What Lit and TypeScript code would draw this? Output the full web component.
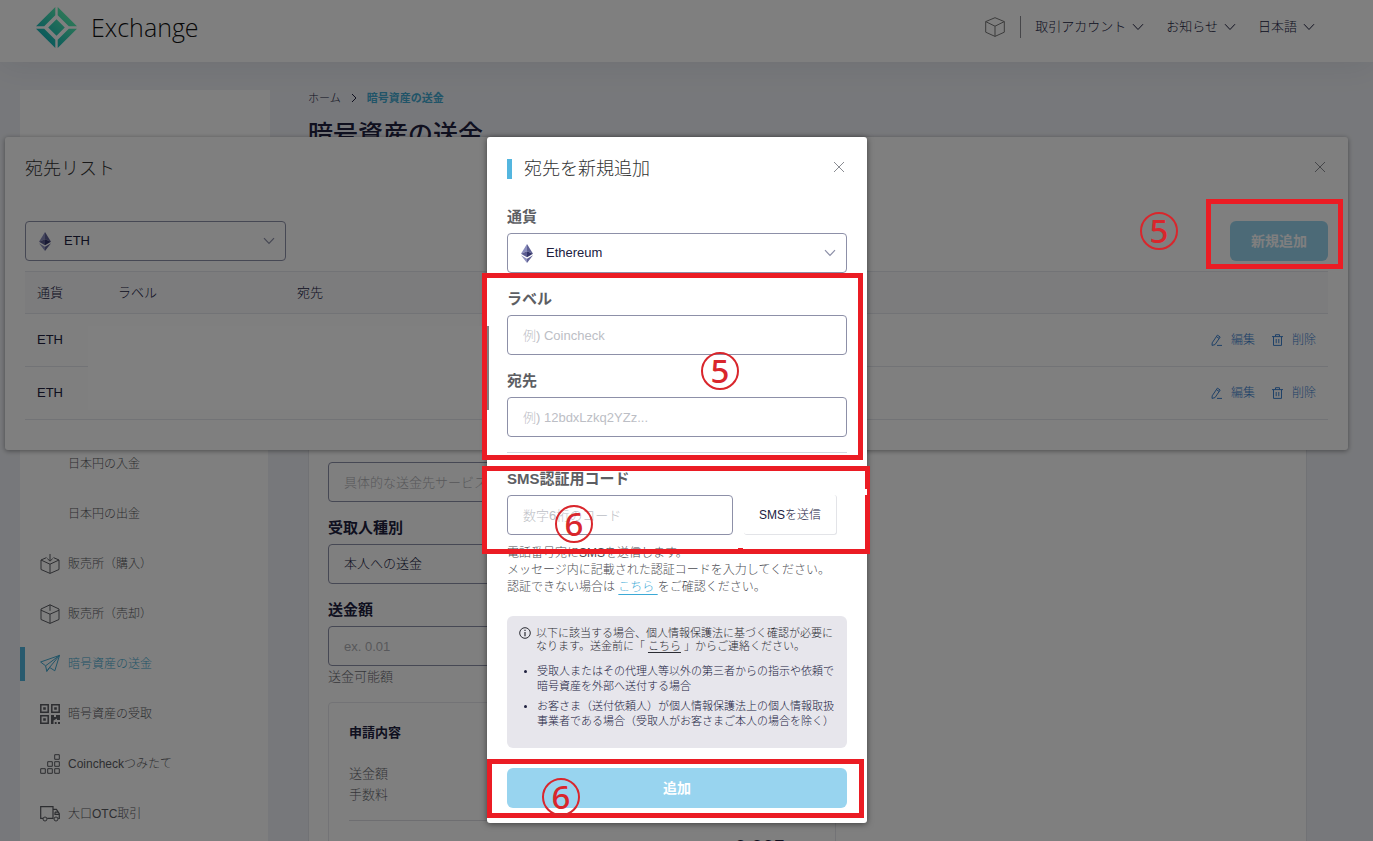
import { LitElement, html, css, svg } from "lit";
import { customElement } from "lit/decorators.js";

const line = (w: number, h: number, vb: string, body: unknown, cls = "icon") =>
  html`<svg class=${cls} width=${w} height=${h} viewBox=${vb} aria-hidden="true">${body}</svg>`;

const chevron = () => line(12, 8, "0 0 12 8", svg`<path d="M1 1.2 6 6.5 11 1.2"/>`, "icon chev");
const cross = () => line(12, 12, "0 0 12 12", svg`<path d="M1 1 11 11M11 1 1 11"/>`);
const cube = () => line(20, 20, "0 0 20 20", svg`<path d="M10 .7 19.3 4.6V15.2L10 19.4.7 15.2V4.6ZM.7 4.6 10 9.2 19.3 4.6M10 9.2V19.4"/>`);
const eth = () => html`<svg class="eth" width="12" height="19" viewBox="0 0 12 19" aria-hidden="true">
  <path d="M6 0 0 9.8 6 7.2Z" fill="#8a8dbd"/><path d="M6 0 12 9.8 6 7.2Z" fill="#5f6195"/>
  <path d="M0 9.8 6 7.2V13.2Z" fill="#5b5c91"/><path d="M12 9.8 6 7.2V13.2Z" fill="#33346a"/>
  <path d="M0 11.2 6 14.7V19Z" fill="#9092bf"/><path d="M12 11.2 6 14.7V19Z" fill="#5f6195"/></svg>`;
const pencil = () => line(11, 12, "0 0 11 12", svg`<path d="M1.2 8.8 6.4 1.1 9.2 3 4 10.6 1 11.4ZM5.4 2.6 8.2 4.5M6 11.4H11"/>`);
const trash = () => line(11, 12, "0 0 11 12", svg`<path d="M0 2.6H11M3.5 2.6V.7H7.5V2.6M1.5 2.6V11.4H9.5V2.6M4.2 5V9.2M6.8 5V9.2"/>`);

const menuIcons: Record<string, unknown> = {
  buy: svg`<path d="M6.5 3.6 1 6V15.5L10 19.4 19 15.5V6L13.5 3.6M1 6 10 10.2 19 6M10 10.2V19.4M10 0V6.8M7.3 4.6 10 7.2 12.7 4.6"/>`,
  sell: svg`<path d="M10 .8 19 5V15.5L10 19.4 1 15.5V5ZM1 6.2 10 10.2 19 6.2M10 10.2V19.4M10 .8V6.8"/>`,
  send: svg`<path d="M.6 8 19.5 1.4 14.8 16.8 9.6 13.4 6.8 17.4 5.6 11.8ZM19.5 1.4 5.6 11.8M19.5 1.4 9.6 13.4M6.8 17.4 9.6 13.4"/>`,
  qr: svg`<path stroke-width="1.5" d="M.8.8H8.2V8.2H.8ZM11.8.8H19.2V8.2H11.8ZM.8 11.8H8.2V19.2H.8Z"/><path class="solid" d="M3.2 3.2H5.8V5.8H3.2ZM14.2 3.2H16.8V5.8H14.2ZM3.2 14.2H5.8V16.8H3.2ZM11 11H14V13H16V11H20V16H17V14.5L13.5 16.5V20H11ZM14.8 18H16.6V20H14.8ZM18 18H20V20H18Z"/>`,
  blocks: svg`<path d="M14.7.7H19.3V5.3H14.7ZM7.7 7.7H12.3V12.3H7.7ZM14.7 7.7H19.3V12.3H14.7ZM.7 14.7H5.3V19.3H.7ZM7.7 14.7H12.3V19.3H7.7ZM14.7 14.7H19.3V19.3H14.7Z"/>`,
  truck: svg`<path stroke-width="1.2" d="M3 14.4H.7V2.6H13V14.4H7.2M13 5.4H16.4L19.3 9.6V14.4H18.2M13.6 14.4H13M15 8.2H18M15 8.2V10.4H19"/><circle cx="5" cy="15" r="2"/><circle cx="16" cy="15" r="2"/>`,
};

@customElement("app-root")
export class AppRoot extends LitElement {
  static styles = css`
    :host {
      display: block;
      position: relative;
      height: 100vh;
      overflow: hidden;
      background: #eff1f6;
      color: #20213f;
      font: 300 13px/20px "Liberation Sans", "Noto Sans CJK JP", sans-serif;
    }
    * { box-sizing: border-box; }
    h1, h2, p, ul { margin: 0; padding: 0; font-weight: 300; }
    a { color: inherit; text-decoration: none; }
    button { font: inherit; color: inherit; border: 0; padding: 0; background: none; }
    .icon { fill: none; stroke: currentColor; stroke-width: 1; flex: none; display: block; }
    .solid { fill: currentColor; stroke: none; }

    .top {
      position: relative;
      display: flex;
      align-items: center;
      justify-content: space-between;
      height: 62px;
      padding: 0 58px 8px 36px;
      background: #fff;
      box-shadow: 0 4px 32px rgba(30, 40, 70, 0.08);
    }
    .brand { display: flex; align-items: center; gap: 14px; color: #111; font: 300 25px/36px "Open Sans", sans-serif; }
    .nav { display: flex; align-items: center; gap: 22px; }
    .nav a { display: flex; align-items: center; gap: 6px; }
    .nav .box { padding-right: 15px; margin-right: -8px; height: 22px; border-right: 1px solid #8c8d93; color: #777; }

    .body {
      display: grid;
      grid-template-columns: 248px minmax(0, 1fr);
      gap: 40px;
      padding: 28px 66px 0 20px;
    }
    .account { height: 349px; width: 250px; background: #fff; }
    .menu { background: #fff; min-height: 600px; color: #5b5c62; font-size: 12px; }
    .menu a { display: flex; align-items: center; gap: 8px; height: 50px; padding-left: 20px; }
    .menu .none { width: 20px; }
    .menu a.on { color: #43a9d0; position: relative; }
    .menu a.on::before { content: ""; position: absolute; left: 0; top: 8px; width: 5px; height: 34px; background: #50b4dc; }

    .crumbs { display: flex; align-items: center; gap: 10px; height: 16px; font-size: 11px; line-height: 16px; }
    .crumbs b { color: #43a9d0; font-weight: 700; }
    h1 { margin-top: 10px; font-size: 25px; line-height: 36px; font-weight: 500; }
    .card { margin-top: 216px; padding: 93px 19px 0; height: 700px; background: #fff; border: 1px solid #e2e4ea; }
    .form { width: 508px; max-width: 100%; }
    .field { display: block; }
    .name { display: block; padding: 16px 0 6px; font-size: 15px; line-height: 20px; font-weight: 700; }
    .ctl {
      display: block;
      width: 100%;
      height: 40px;
      margin: 0;
      padding: 0 15px;
      border: 1px solid #8d90a8;
      border-radius: 4px;
      background: #fff;
      color: #20213f;
      font: inherit;
      outline: 0;
      appearance: none;
    }
    .ctl::placeholder { color: #bcbec5; opacity: 1; }
    .form .ctl::placeholder { color: #b0b1b6; }
    .hint { color: #6b6c72; line-height: 22px; }
    .summary { margin-top: 14px; padding: 19px 20px 0; height: 300px; border: 1px solid #e6e7ec; border-radius: 4px; color: #6b6c72; line-height: 21px; }
    .summary h2 { margin-bottom: 20px; color: #20213f; font-size: 13px; font-weight: 700; }
    .total { display: flex; justify-content: flex-end; margin-top: 15px; padding: 14px 30px 0 0; border-top: 1px solid #dcdde2; color: #20213f; font-size: 20px; line-height: 24px; font-weight: 700; }

    .veil { position: absolute; inset: 0; background: rgba(0, 0, 0, 0.5); }

    .list {
      position: absolute;
      top: 137px;
      left: 5px;
      right: 25px;
      padding: 22px 20px 30px;
      background: #fff;
      border-radius: 3px;
      box-shadow: 0 1px 5px rgba(0, 0, 0, 0.4);
    }
    .head { display: flex; justify-content: space-between; align-items: flex-start; color: #333; }
    .head h2 { font-size: 18px; line-height: 20px; }
    .head button { display: grid; place-items: center; width: 16px; height: 16px; color: #8a8c92; }
    .bar { display: flex; justify-content: space-between; margin: 42px 0 10px; }
    .pick { position: relative; display: block; width: 261px; }
    .pick .eth { position: absolute; left: 14px; top: 11px; }
    .pick .chev { position: absolute; right: 11px; top: 16px; color: #8d90a8; stroke-width: 1.2; }
    .pick .ctl { padding-left: 38px; }
    .cta { height: 40px; border-radius: 6px; background: #98d4ef; color: #fff; font-size: 14px; font-weight: 700; }
    .bar .cta { width: 98px; }
    table { width: 100%; border-collapse: collapse; table-layout: fixed; }
    th, td { padding: 0 12px; text-align: left; font-weight: 300; border-bottom: 1px solid #e4e6ec; height: 53px; }
    th { height: 42px; background: #f8f8fb; border-top: 1px solid #e4e6ec; }
    .c1 { width: 81px; }
    .c2 { width: 179px; }
    .c4 { width: 180px; }
    .acts { display: flex; justify-content: flex-end; gap: 17px; color: #3d82d0; font-size: 12px; }
    .acts a { display: flex; align-items: center; gap: 9px; }

    .center { position: absolute; top: 137px; left: 0; right: 19px; display: flex; justify-content: center; pointer-events: none; }
    .modal {
      width: 380px;
      padding: 22px 20px 15px;
      background: #fff;
      border-radius: 3px;
      box-shadow: 0 1px 6px rgba(0, 0, 0, 0.5);
      color: #20213f;
      pointer-events: auto;
    }
    .modal .head h2 { padding-left: 12px; border-left: 5px solid #54b6df; line-height: 20px; }
    .modal .name { color: #5d5e63; }
    .modal .first { padding-top: 28px; }
    .modal .pick { width: 100%; }
    .sms { margin-top: 15px; border-top: 1px solid #d5d8e0; }
    .row { display: flex; gap: 11px; }
    .row .ctl { width: 226px; }
    .send { width: 93px; height: 40px; border-radius: 3px; border: solid #e3e4e8; border-width: 0 1px 1px 0; font-size: 12px; }
    .help { padding-top: 10px; color: #4c4d53; font-size: 12px; line-height: 17px; }
    .help a { color: #3ba9d6; text-decoration: underline; text-underline-offset: 3px; }
    .note { margin: 20px 0; padding: 11px 12px 14px; border-radius: 6px; background: #e7e6ec; font-size: 11px; }
    .lead { display: grid; grid-template-columns: 11px 1fr; gap: 6px; line-height: 13px; color: #2b2c33; }
    .lead a { text-decoration: underline; text-underline-offset: 2px; }
    .lead p { margin-right: -4px; }
    ul { list-style: disc; padding: 11px 0 0 18px; line-height: 15px; margin-right: -4px; }
    li { padding-bottom: 5px; }
    li::marker { font-size: 10px; }
    .modal .cta { display: block; width: 100%; }

    .patch { position: absolute; left: 88px; top: 326px; width: 401px; height: 84px; background: #808080; }
    .marks { position: relative; width: 380px; }
    .mark { position: absolute; border: 5px solid #eb1c24; }
    .m-new { right: 30px; top: 199px; width: 137px; height: 70px; }
    .m-label { left: -5px; top: 136px; width: 381px; height: 187px; }
    .m-sms { left: -5px; top: 329px; width: 388px; height: 88px; }
    .m-sms::before { content: ""; position: absolute; left: 251px; bottom: 0; width: 5px; height: 1px; background: #eb1c24; }
    .m-sms::after { content: ""; position: absolute; right: -2px; top: 18px; width: 3px; height: 6px; background: #fff; }
    .m-add { left: 0; top: 622px; width: 377px; height: 59px; }
    .num {
      position: absolute;
      width: 38px;
      height: 38px;
      border: 2px solid #d9262c;
      border-radius: 50%;
      color: #d9262c;
      font: 500 33px/34px "Noto Sans", sans-serif;
      text-align: center;
    }
    .n1 { right: 195px; top: 212px; }
    .n2 { left: 214px; top: 215px; }
    .n3 { left: 68px; top: 368px; }
    .n4 { left: 55px; top: 641px; }
  `;

  private item(label: string, icon: string, on = false) {
    return html`<a href="#" class=${on ? "on" : ""}>
      ${icon ? line(20, 20, "0 0 20 20", menuIcons[icon]) : html`<span class="none"></span>`}<span>${label}</span></a>`;
  }

  private entry() {
    return html`<tr><td>ETH</td><td></td><td></td>
      <td><div class="acts"><a href="#">${pencil()}編集</a><a href="#">${trash()}削除</a></div></td></tr>`;
  }

  render() {
    return html`
      <header class="top">
        <a class="brand" href="#">
          <svg width="41" height="41" viewBox="0 0 41 41" aria-hidden="true">
            <defs><linearGradient id="g" x1="0" y1="1" x2="1" y2="0">
              <stop offset="0.2" stop-color="#12b3b8"/><stop offset="0.8" stop-color="#5cf0b0"/></linearGradient></defs>
            <path fill="url(#g)" d="M19.3 0V8.2L8.2 19.3H0ZM21.7 0V8.2L32.8 19.3H41ZM19.3 41V32.8L8.2 21.7H0ZM21.7 41V32.8L32.8 21.7H41ZM20.5 12.2 28.8 20.5 20.5 28.8 12.2 20.5Z"/>
          </svg>
          <span>Exchange</span>
        </a>
        <nav class="nav">
          <a class="box" href="#" aria-label="box">${cube()}</a>
          <a href="#">取引アカウント${chevron()}</a>
          <a href="#">お知らせ${chevron()}</a>
          <a href="#">日本語${chevron()}</a>
        </nav>
      </header>

      <div class="body">
        <aside>
          <div class="account"></div>
          <nav class="menu">
            ${this.item("日本円の入金", "")}
            ${this.item("日本円の出金", "")}
            ${this.item("販売所（購入）", "buy")}
            ${this.item("販売所（売却）", "sell")}
            ${this.item("暗号資産の送金", "send", true)}
            ${this.item("暗号資産の受取", "qr")}
            ${this.item("Coincheckつみたて", "blocks")}
            ${this.item("大口OTC取引", "truck")}
          </nav>
        </aside>
        <main>
          <nav class="crumbs"><a href="#">ホーム</a>
            ${line(6, 10, "0 0 6 10", svg`<path d="M1 1 5 5 1 9"/>`)}<b>暗号資産の送金</b></nav>
          <h1>暗号資産の送金</h1>
          <section class="card"><div class="form">
            <input class="ctl" aria-label="service" placeholder="具体的な送金先サービス" />
            <label class="field"><span class="name">受取人種別</span>
              <select class="ctl"><option>本人への送金</option></select></label>
            <label class="field"><span class="name">送金額</span>
              <input class="ctl" placeholder="ex. 0.01" /></label>
            <p class="hint">送金可能額</p>
            <div class="summary">
              <h2>申請内容</h2><p>送金額</p><p>手数料</p>
              <div class="total">0.005</div>
            </div>
          </div></section>
        </main>
      </div>

      <section class="list" role="dialog" aria-labelledby="list-title">
        <div class="head"><h2 id="list-title">宛先リスト</h2><button aria-label="close">${cross()}</button></div>
        <div class="bar">
          <label class="pick" aria-label="currency"><select class="ctl"><option>ETH</option></select>${eth()}${chevron()}</label>
          <button class="cta">新規追加</button>
        </div>
        <table>
          <thead><tr><th class="c1">通貨</th><th class="c2">ラベル</th><th>宛先</th><th class="c4"></th></tr></thead>
          <tbody>${this.entry()}${this.entry()}</tbody>
        </table>
      </section>

      <div class="veil"></div>

      <div class="center">
        <section class="modal" role="dialog" aria-labelledby="add-title">
          <div class="head"><h2 id="add-title">宛先を新規追加</h2><button aria-label="close">${cross()}</button></div>
          <label class="field"><span class="name first">通貨</span>
            <span class="pick"><select class="ctl"><option>Ethereum</option></select>${eth()}${chevron()}</span></label>
          <label class="field"><span class="name">ラベル</span><input class="ctl" placeholder="例) Coincheck" /></label>
          <label class="field"><span class="name">宛先</span><input class="ctl" placeholder="例) 12bdxLzkq2YZz..." /></label>
          <div class="sms">
            <label class="name" for="code">SMS認証用コード</label>
            <div class="row"><input class="ctl" id="code" placeholder="数字6桁のコード" /><button class="send">SMSを送信</button></div>
            <p class="help">電話番号宛にSMSを送信します。<br />メッセージ内に記載された認証コードを入力してください。<br />認証できない場合は <a href="#">こちら </a>をご確認ください。</p>
          </div>
          <div class="note">
            <div class="lead">
              <svg width="12" height="12" viewBox="0 0 12 12" aria-hidden="true"><circle cx="6" cy="6" r="5.3" fill="none" stroke="currentColor"/><path d="M5.4 5H6.6V9.2H5.4ZM5.4 2.8H6.6V4H5.4Z" fill="currentColor"/></svg>
              <p>以下に該当する場合、個人情報保護法に基づく確認が必要になります。送金前に「 <a href="#">こちら</a> 」からご連絡ください。</p>
            </div>
            <ul>
              <li>受取人またはその代理人等以外の第三者からの指示や依頼で暗号資産を外部へ送付する場合</li>
              <li>お客さま（送付依頼人）が個人情報保護法上の個人情報取扱事業者である場合（受取人がお客さまご本人の場合を除く）</li>
            </ul>
          </div>
          <button class="cta">追加</button>
        </section>
      </div>

      <div class="patch"></div>
      <div class="mark m-new"></div>
      <span class="num n1">5</span>
      <div class="center"><div class="marks">
        <div class="mark m-label"></div><div class="mark m-sms"></div><div class="mark m-add"></div>
        <span class="num n2">5</span><span class="num n3">6</span><span class="num n4">6</span>
      </div></div>
    `;
  }
}
